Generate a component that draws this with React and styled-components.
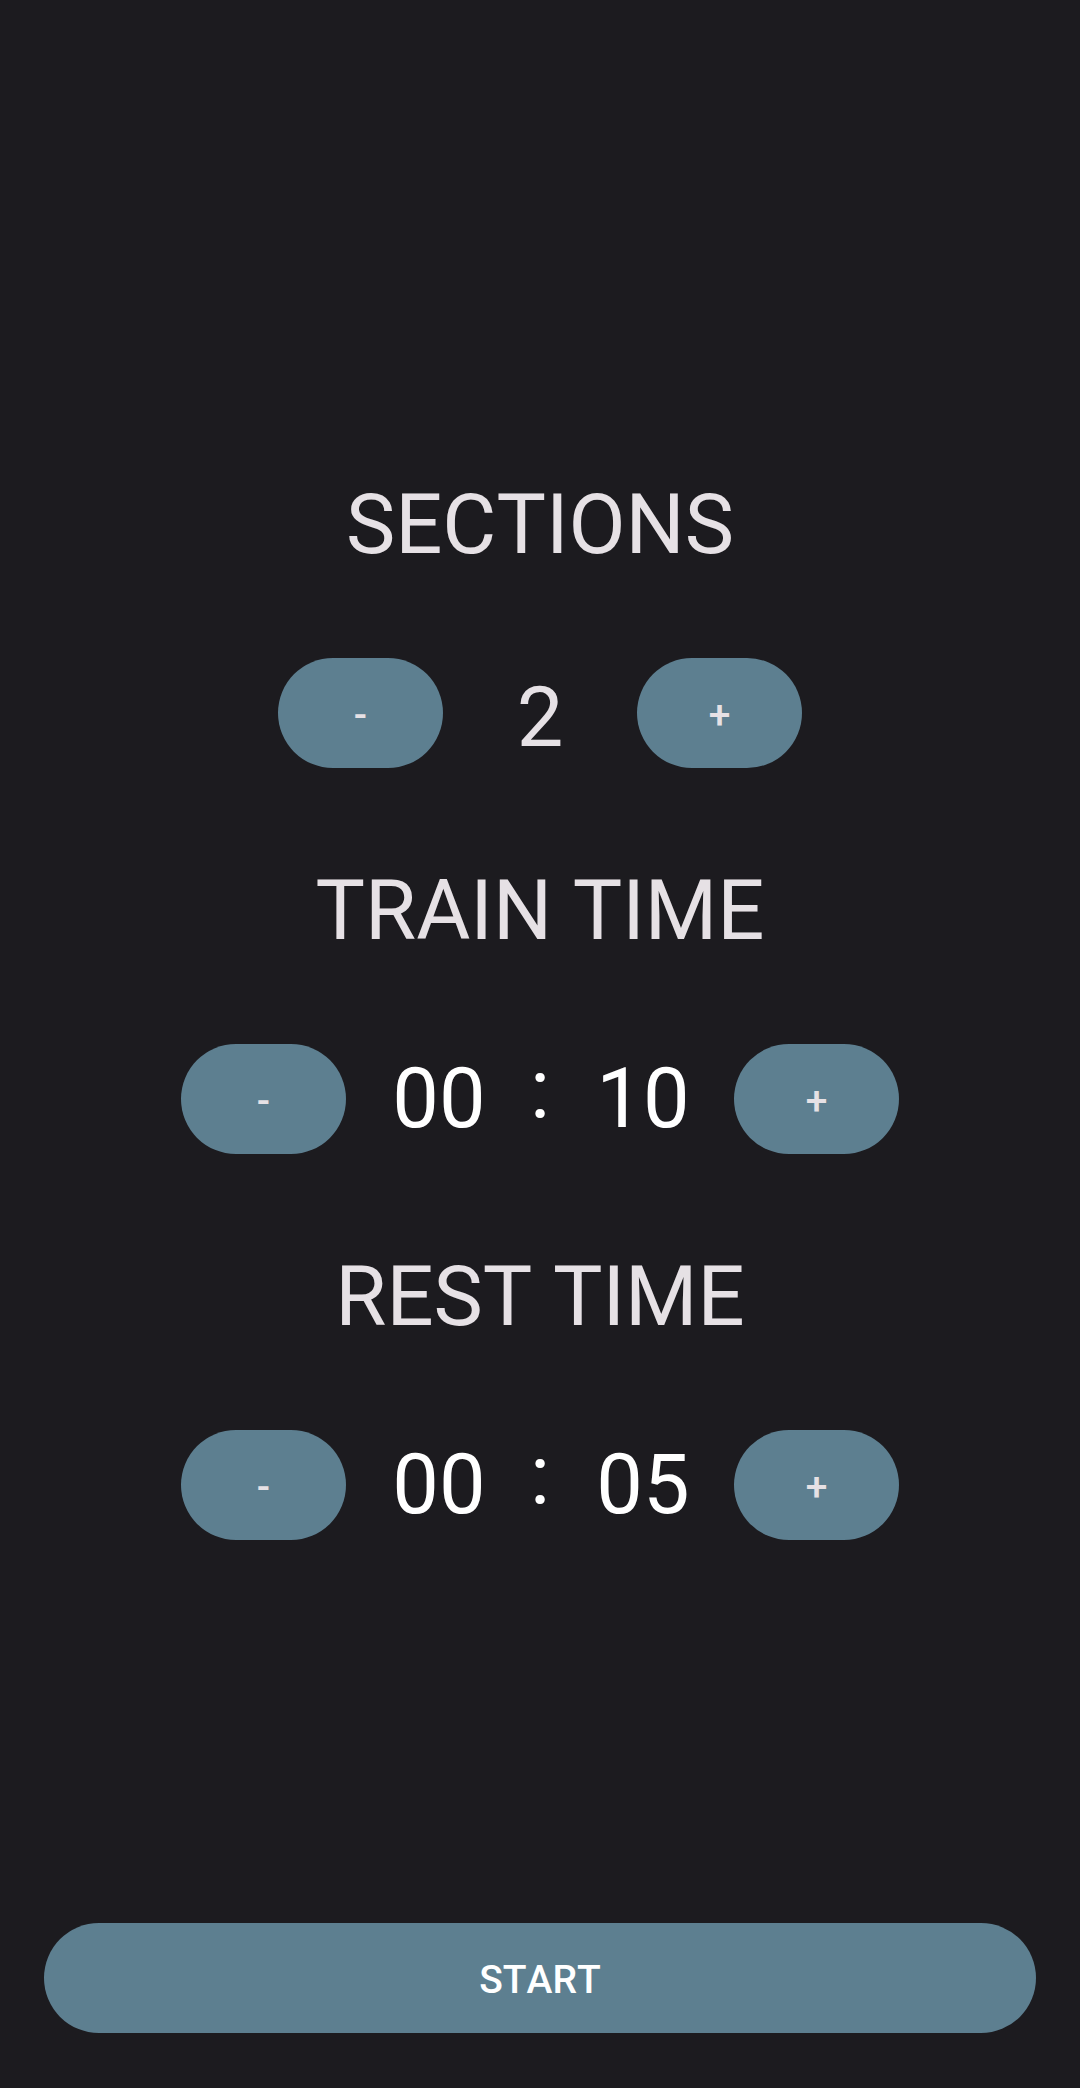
import React, { useState } from "react";
import styled, { createGlobalStyle } from "styled-components";

const GlobalStyle = createGlobalStyle`
  *, *::before, *::after { box-sizing: border-box; }
  body {
    margin: 0;
    background: #1c1b1f;
    color: #e6e1e5;
    font-family: Roboto, "Noto Sans", sans-serif;
    font-kerning: none;
  }
`;

const Screen = styled.main`
  min-height: 100vh;
  display: flex;
  flex-direction: column;
  padding: 476px 44px 55px;
`;

const Settings = styled.div`
  display: flex;
  flex-direction: column;
  gap: 94px;
  margin-bottom: 94px;
`;

const Setting = styled.section`
  display: flex;
  flex-direction: column;
  align-items: center;
  gap: 84px;
`;

const Title = styled.h2`
  margin: 0;
  font-size: 83px;
  line-height: 98px;
  font-weight: 400;
  text-align: center;
`;

const Controls = styled.div`
  display: flex;
  justify-content: center;
  align-items: center;
`;

const PillButton = styled.button`
  height: 110px;
  border: 0;
  border-radius: 55px;
  padding: 4px 0 0;
  background: #5d7f90;
  color: ${(p) => (p.$bright ? "#ffffff" : "#e6e1e5")};
  font-family: inherit;
  font-kerning: inherit;
  font-size: 39px;
  line-height: 46px;
  font-weight: 500;
  cursor: pointer;
`;

const StepButton = styled(PillButton)`
  width: 165px;
`;

const StartButton = styled(PillButton)`
  width: 100%;
  margin-top: auto;
`;

const Count = styled.output`
  align-self: flex-end;
  width: 194px;
  font-size: 83px;
  line-height: 100px;
  text-align: center;
`;

const Time = styled.div`
  display: flex;
  align-self: stretch;
  align-items: center;
  justify-content: center;
  width: 388px;
`;

const TimeField = styled.input`
  width: 184px;
  height: 98px;
  padding: 0 0 2px 2px;
  border: 0;
  background: transparent;
  color: #ffffff;
  font-family: inherit;
  font-size: 83px;
  text-align: center;
`;

const Colon = styled.span`
  align-self: flex-start;
  width: 20px;
  color: #ffffff;
  font-size: 83px;
  line-height: 92px;
  text-align: center;
`;

const pad = (n) => String(n).padStart(2, "0");

function TimeSetting({ title, initial }) {
  const [seconds, setSeconds] = useState(initial);
  const minutes = Math.floor(seconds / 60);
  const rest = seconds % 60;
  const read = (e) => Math.min(59, Number(e.target.value.replace(/\D/g, "").slice(-2)));
  return (
    <Setting>
      <Title>{title}</Title>
      <Controls>
        <StepButton type="button" onClick={() => setSeconds(Math.max(0, seconds - 1))}>-</StepButton>
        <Time>
          <TimeField
            aria-label={`${title} minutes`}
            inputMode="numeric"
            value={pad(minutes)}
            onChange={(e) => setSeconds(read(e) * 60 + rest)}
          />
          <Colon>:</Colon>
          <TimeField
            aria-label={`${title} seconds`}
            inputMode="numeric"
            value={pad(rest)}
            onChange={(e) => setSeconds(minutes * 60 + read(e))}
          />
        </Time>
        <StepButton type="button" onClick={() => setSeconds(seconds + 1)}>+</StepButton>
      </Controls>
    </Setting>
  );
}

export default function App() {
  const [sections, setSections] = useState(2);
  return (
    <>
      <GlobalStyle />
      <Screen>
        <Settings>
          <Setting>
            <Title>SECTIONS</Title>
            <Controls>
              <StepButton type="button" onClick={() => setSections(Math.max(1, sections - 1))}>-</StepButton>
              <Count>{sections}</Count>
              <StepButton type="button" onClick={() => setSections(sections + 1)}>+</StepButton>
            </Controls>
          </Setting>
          <TimeSetting title="TRAIN TIME" initial={10} />
          <TimeSetting title="REST TIME" initial={5} />
        </Settings>
        <StartButton type="button" $bright>START</StartButton>
      </Screen>
    </>
  );
}
